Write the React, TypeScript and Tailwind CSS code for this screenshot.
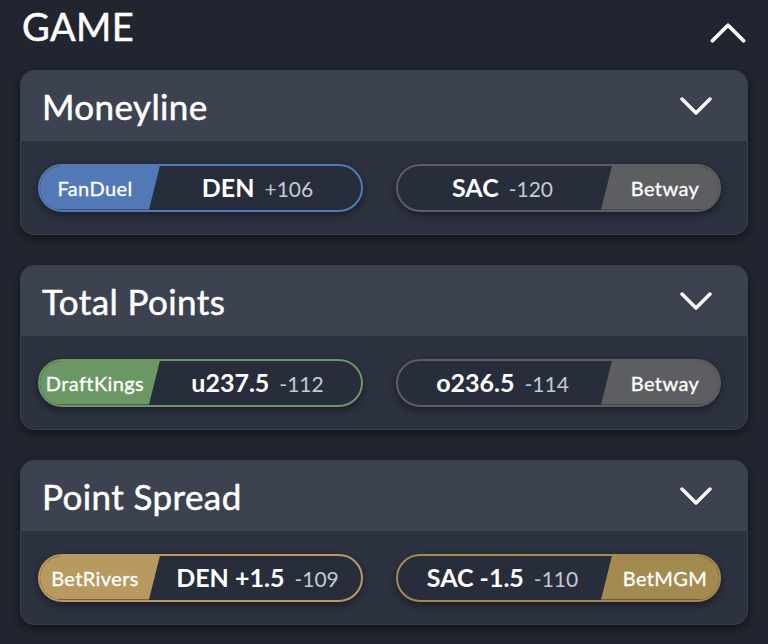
import React from 'react';

interface Side {
  book: string;
  color: string;
  border: string;
  main: string;
  odds: string;
}

interface Market {
  title: string;
  left: Side;
  right: Side;
}

const markets: Market[] = [
  {
    title: 'Moneyline',
    left: { book: 'FanDuel', color: 'bg-[#5279b6]', border: 'border-[#5279b6]', main: 'DEN', odds: '+106' },
    right: { book: 'Betway', color: 'bg-[#5d5e62]', border: 'border-[#5d5e62]', main: 'SAC', odds: '-120' },
  },
  {
    title: 'Total Points',
    left: { book: 'DraftKings', color: 'bg-[#6a9763]', border: 'border-[#6a9763]', main: 'u237.5', odds: '-112' },
    right: { book: 'Betway', color: 'bg-[#5d5e62]', border: 'border-[#5d5e62]', main: 'o236.5', odds: '-114' },
  },
  {
    title: 'Point Spread',
    left: { book: 'BetRivers', color: 'bg-[#b8995f]', border: 'border-[#b8995f]', main: 'DEN +1.5', odds: '-109' },
    right: { book: 'BetMGM', color: 'bg-[#a38b4f]', border: 'border-[#a38b4f]', main: 'SAC -1.5', odds: '-110' },
  },
];

function Chevron({ up, className }: { up?: boolean; className?: string }) {
  return (
    <svg viewBox="0 0 32 18" className={className} fill="none" stroke="white" strokeWidth="3.4" strokeLinecap="round" strokeLinejoin="round">
      {up ? <path d="M2 16 L16 2 L30 16" /> : <path d="M2 2 L16 16 L30 2" />}
    </svg>
  );
}

function OddsPill({ side, bookRight }: { side: Side; bookRight?: boolean }) {
  const label = (
    <div
      className={`${side.color} h-full flex items-center justify-center text-white text-[20px] tracking-[0.4px] [-webkit-text-stroke:0.3px_white] ${
        bookRight
          ? 'w-[118px] pl-[10px] [clip-path:polygon(11px_0,100%_0,100%_100%,0_100%)] -ml-[6px]'
          : 'w-[120px] pr-[10px] [clip-path:polygon(0_0,100%_0,calc(100%-11px)_100%,0_100%)] -mr-[6px]'
      }`}
    >
      {side.book}
    </div>
  );
  return (
    <div
      className={`w-[325px] h-[48px] rounded-full border-2 ${side.border} bg-[#282d3b] overflow-hidden flex items-center shadow-[0_3px_8px_rgba(0,0,0,0.45)]`}
    >
      {!bookRight && label}
      <div className="flex-1 flex items-baseline justify-center gap-[10px]">
        <span className="text-white text-[25px] font-bold">{side.main}</span>
        <span className="text-[#c5c9d3] text-[21px]">{side.odds}</span>
      </div>
      {bookRight && label}
    </div>
  );
}

function MarketCard({ market }: { market: Market }) {
  return (
    <div className="rounded-[14px] overflow-hidden bg-[#2d3240] shadow-[0_4px_10px_rgba(0,0,0,0.45)] border border-[#3a404c]">
      <div className="h-[70px] bg-[#3c4250] flex items-center justify-between pl-[21px] pr-[35px]">
        <span className="text-white text-[35px] tracking-[0.4px] [-webkit-text-stroke:0.5px_white]">{market.title}</span>
        <Chevron className="w-[32px] h-[18px]" />
      </div>
      <div className="h-[93px] flex items-center pl-[17px] gap-[33px]">
        <OddsPill side={market.left} />
        <OddsPill side={market.right} bookRight />
      </div>
    </div>
  );
}

export default function App() {
  return (
    <div className="w-[768px] h-[644px] bg-[#21252f] px-[20px] overflow-hidden" style={{ fontFamily: 'Lato, "Open Sans", sans-serif' }}>
      <div className="h-[70px] flex items-start justify-between pt-[2px] pl-[2px]">
        <span className="text-white text-[38px] tracking-[0.4px] leading-[48px] [-webkit-text-stroke:0.5px_white]">GAME</span>
        <Chevron up className="w-[40px] h-[20px] mt-[21px]" />
      </div>
      <div className="flex flex-col gap-[30px]">
        {markets.map((m) => (
          <MarketCard key={m.title} market={m} />
        ))}
      </div>
    </div>
  );
}
